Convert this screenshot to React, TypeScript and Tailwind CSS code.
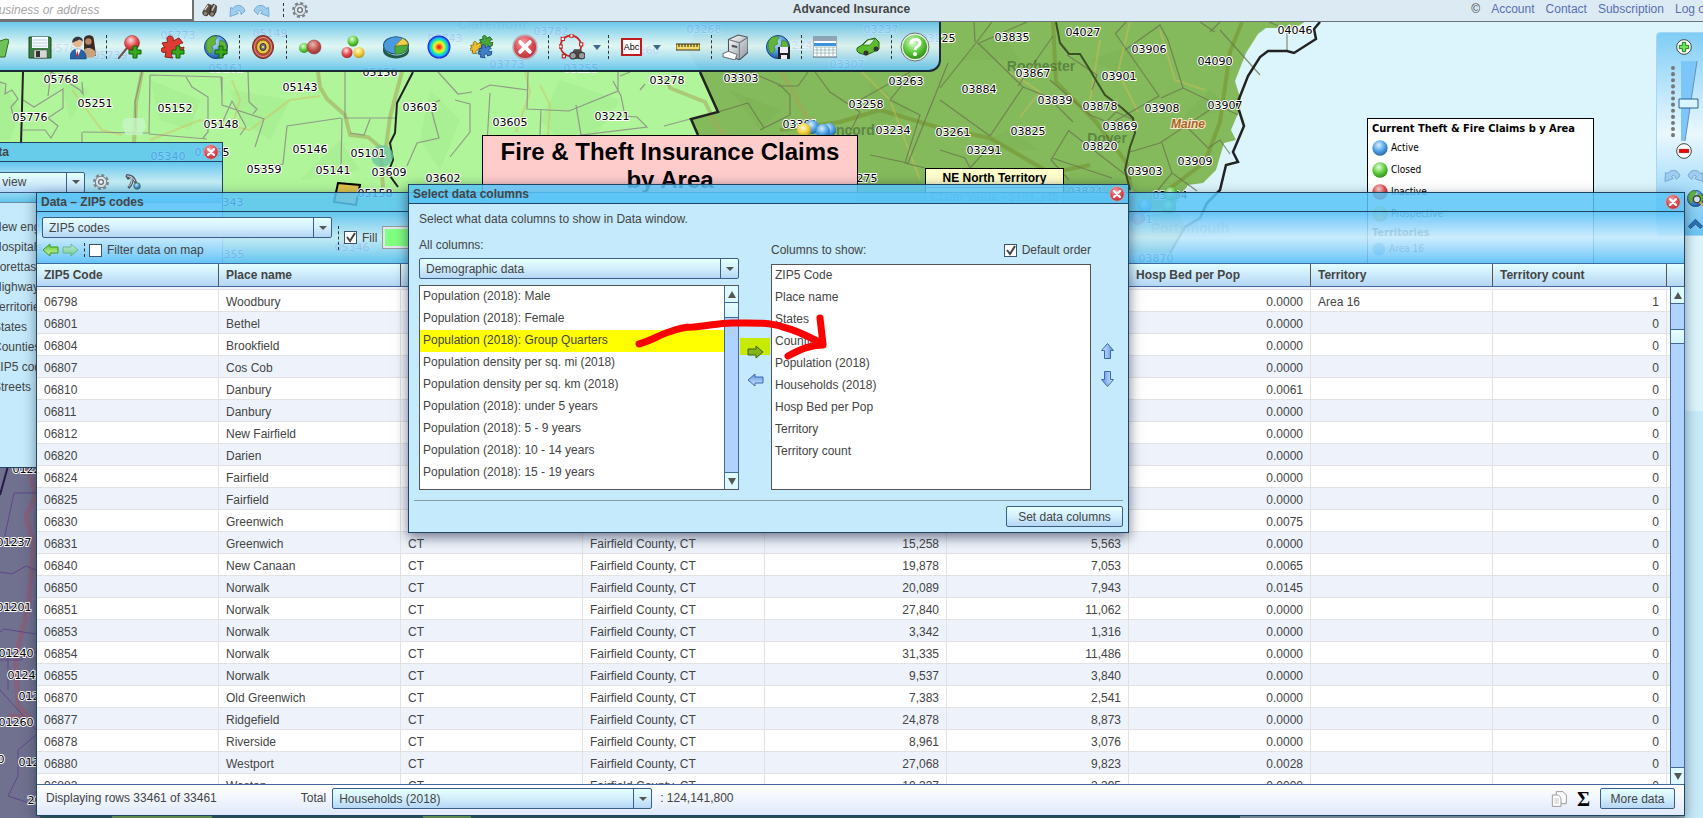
import React from "react";
import clsx from "clsx";

type Label = [string, number, number];

const zipLabels: Label[] = [
  ["05768", 61, 79], ["05251", 95, 103], ["05776", 30, 117], ["05152", 175, 108],
  ["05148", 221, 124], ["05143", 300, 87], ["05156", 380, 72], ["03603", 420, 107],
  ["05146", 310, 149], ["05101", 368, 153], ["05359", 264, 169], ["05141", 333, 170],
  ["03609", 389, 172], ["03602", 443, 178], ["05158", 375, 193], ["05340", 168, 156],
  ["05355", 212, 152], ["05343", 226, 202], ["05149", 270, 33], ["05773", 178, 35],
  ["05161", 226, 68], ["05761", 66, 48], ["05739", 110, 55], ["03782", 551, 31],
  ["03773", 507, 64], ["03255", 581, 68], ["03268", 704, 29], ["03260", 642, 50],
  ["03237", 881, 29], ["03224", 795, 45], ["03307", 847, 64], ["03743", 445, 38],
  ["03278", 667, 80], ["03303", 741, 78], ["03605", 510, 122], ["03221", 612, 116],
  ["03263", 906, 81], ["03258", 866, 104], ["03301", 800, 124], ["03234", 893, 130],
  ["03275", 860, 178], ["03261", 953, 132], ["03225", 938, 38], ["03835", 1012, 37],
  ["04027", 1083, 32], ["03906", 1149, 49], ["04090", 1215, 61], ["04046", 1295, 30],
  ["03867", 1033, 73], ["03901", 1119, 76], ["03884", 979, 89], ["03839", 1055, 100],
  ["03878", 1100, 106], ["03908", 1162, 108], ["03907", 1225, 105], ["03869", 1120, 126],
  ["03825", 1028, 131], ["03291", 984, 150], ["03820", 1100, 146], ["03903", 1145, 171],
  ["03909", 1195, 161], ["03824", 1085, 191], ["03904", 1170, 195], ["03801", 1135, 219],
  ["03870", 1156, 258], ["03046", 775, 200], ["05346", 352, 247], ["05355", 227, 254],
  ["01226", 30, 469], ["01237", 14, 542], ["01201", 14, 607], ["01240", 16, 653],
  ["01242", 25, 675], ["01223", 36, 696], ["01260", 16, 722], ["01230", -13, 759],
  ["01245", 36, 762], ["20134", 45, 800],
];

const columns = ["ZIP5 Code", "Place name", "States", "Counties", "Population (2018)", "Households (2018)", "Hosp Bed per Pop", "Territory", "Territory count"];

const rows: string[][] = [
  ["06798", "Woodbury", "9,723", "3,912", "0.0000", "Area 16", "1"],
  ["06801", "Bethel", "19,604", "7,228", "0.0000", "", "0"],
  ["06804", "Brookfield", "17,133", "6,325", "0.0000", "", "0"],
  ["06807", "Cos Cob", "7,216", "2,608", "0.0000", "", "0"],
  ["06810", "Danbury", "53,207", "18,674", "0.0061", "", "0"],
  ["06811", "Danbury", "31,904", "11,547", "0.0000", "", "0"],
  ["06812", "New Fairfield", "14,126", "4,894", "0.0000", "", "0"],
  ["06820", "Darien", "21,753", "6,939", "0.0000", "", "0"],
  ["06824", "Fairfield", "35,118", "11,267", "0.0000", "", "0"],
  ["06825", "Fairfield", "21,930", "7,631", "0.0000", "", "0"],
  ["06830", "Greenwich", "24,806", "9,954", "0.0075", "", "0"],
  ["06831", "Greenwich", "15,258", "5,563", "0.0000", "", "0"],
  ["06840", "New Canaan", "19,878", "7,053", "0.0065", "", "0"],
  ["06850", "Norwalk", "20,089", "7,943", "0.0145", "", "0"],
  ["06851", "Norwalk", "27,840", "11,062", "0.0000", "", "0"],
  ["06853", "Norwalk", "3,342", "1,316", "0.0000", "", "0"],
  ["06854", "Norwalk", "31,335", "11,486", "0.0000", "", "0"],
  ["06855", "Norwalk", "9,537", "3,840", "0.0000", "", "0"],
  ["06870", "Old Greenwich", "7,383", "2,541", "0.0000", "", "0"],
  ["06877", "Ridgefield", "24,878", "8,873", "0.0000", "", "0"],
  ["06878", "Riverside", "8,961", "3,076", "0.0000", "", "0"],
  ["06880", "Westport", "27,068", "9,823", "0.0028", "", "0"],
  ["06883", "Weston", "10,337", "3,395", "0.0000", "", "0"],
];

const allColumns = [
  "Population (2018): Male",
  "Population (2018): Female",
  "Population (2018): Group Quarters",
  "Population density per sq. mi (2018)",
  "Population density per sq. km (2018)",
  "Population (2018): under 5 years",
  "Population (2018): 5 - 9 years",
  "Population (2018): 10 - 14 years",
  "Population (2018): 15 - 19 years",
];

const layers = ["New england", "Hospitals", "Lorettas", "Highways", "Territories", "States", "Counties", "ZIP5 codes", "Streets"];

const control = "border border-[#3b5d8a] rounded-[2px] bg-linear-to-b from-[#e6ffff] via-[#d3effc] to-[#b5d6f5] text-[#444] text-xs";

/* ---------- shared gradients ---------- */

const Ball = ({ id, light, mid, dark }: { id: string; light: string; mid: string; dark: string }) => (
  <radialGradient id={id} cx="0.42" cy="0.32" r="0.75">
    <stop offset="0" stopColor={light} />
    <stop offset="0.55" stopColor={mid} />
    <stop offset="1" stopColor={dark} />
  </radialGradient>
);

const Gradients = () => (
  <defs>
    <Ball id="blue" light="#d8eeff" mid="#4c9fe4" dark="#1f5c9e" />
    <Ball id="green" light="#e4ffd8" mid="#5ccb38" dark="#2a8016" />
    <Ball id="red" light="#ffdede" mid="#e2484c" dark="#9c1c22" />
    <Ball id="close" light="#f5a0a4" mid="#dc4a52" dark="#b22a36" />
    <Ball id="yellow" light="#fffbd0" mid="#f0cc38" dark="#a98412" />
    <Ball id="maroon" light="#efb8b2" mid="#c4524e" dark="#8a2c2c" />
    <Ball id="globe" light="#c8e5ff" mid="#4a92e0" dark="#174a96" />
    <radialGradient id="heat">
      <stop offset="0.1" stopColor="#f22" />
      <stop offset="0.3" stopColor="#fb2" />
      <stop offset="0.45" stopColor="#df3" />
      <stop offset="0.62" stopColor="#2e8" />
      <stop offset="0.78" stopColor="#1bf" />
      <stop offset="0.95" stopColor="#22d" />
    </radialGradient>
    <linearGradient id="arrowBlue" x1="0" x2="0" y1="0" y2="1">
      <stop offset="0" stopColor="#d5e8ff" />
      <stop offset="1" stopColor="#5f93e0" />
    </linearGradient>
    <linearGradient id="arrowGreen" x1="0" x2="0" y1="0" y2="1">
      <stop offset="0" stopColor="#d5f7b0" />
      <stop offset="1" stopColor="#5cc52e" />
    </linearGradient>
    <linearGradient id="metal" x1="0" x2="1" y1="0" y2="1">
      <stop offset="0" stopColor="#fff" />
      <stop offset="1" stopColor="#8a939c" />
    </linearGradient>
  </defs>
);

/* ---------- icons, all on a 24 grid ---------- */

const Svg = ({ size = 24, children }: { size?: number; children: React.ReactNode }) => (
  <svg width={size} height={size} viewBox="0 0 24 24" className="block shrink-0" aria-hidden="true">
    {children}
  </svg>
);

const Plus = () => <path d="M15 11h4v4h4v4h-4v4h-4v-4h-4v-4h4z" fill="#38a81c" stroke="#17600a" />;

// jigsaw piece with two knobs and two notches
const PUZZLE = "M1 8l6-1c-2-3-1-6 2-6s4 3 3 5l6-3 4 5c-2 0-4 1-4 3s3 2 5 1l-1 6-6 2c0-3-2-4-4-3s-2 4 0 6l-8-1 1-5c-3 1-5 0-5-2s2-3 4-2z";

const Earth = () => (
  <>
    <circle cx="12" cy="12" r="11.5" fill="url(#globe)" stroke="#1c3f78" />
    <path d="M4 4c4-3 7-3 9-2l-2 4 1 3-4 2 1 4-3 4C2 16 1 9 4 4zM16 5l5 2 2 6-3 5-3-3-2-4z" fill="#62b43a" stroke="#3a7c20" strokeWidth=".6" />
  </>
);

const Disk = () => (
  <>
    <path d="M1 2h21l1 1v20H1z" fill="#3d7d3f" stroke="#1e4421" />
    <path d="M4 2h16v11H4z" fill="#f4faff" />
    <path d="M5 5h14M5 8h14M5 11h14" stroke="#b9cfe4" />
    <path d="M6 15h13v8H6z" fill="#d5d9d5" stroke="#4a4a4a" strokeWidth=".5" />
    <path d="M8 16h4v6H8z" fill="#333" />
  </>
);

const Cross = ({ size = 16 }: { size?: number }) => (
  <Svg size={size}>
    <circle cx="12" cy="12" r="11" fill="url(#close)" stroke="#b9aeb8" strokeWidth="1.5" />
    <path d="M7.5 7.5l9 9M16.5 7.5l-9 9" stroke="#fff" strokeWidth="3.5" strokeLinecap="round" />
  </Svg>
);

const Gear = ({ size = 16 }: { size?: number }) => (
  <Svg size={size}>
    <circle cx="12" cy="12" r="10" fill="none" stroke="#7d868e" strokeWidth="4" strokeDasharray="4.5 3.35" />
    <circle cx="12" cy="12" r="8.5" fill="#dfe4e8" stroke="#7a848c" strokeWidth="1.5" />
    <circle cx="12" cy="12" r="3.5" fill="#f4fbff" stroke="#66707a" strokeWidth="2" />
  </Svg>
);

const Undo = ({ flip = false }: { flip?: boolean }) => (
  <svg width="17" height="13" viewBox="0 0 17 13" className={clsx("block", flip && "-scale-x-100")} aria-hidden="true">
    <path d="M1.500 3.500l2.500 1C6.500 0 14 0 16 7l-4 3.500C11.500 7 9.500 5.500 7.500 7.500l2 2-8.500 3z" fill="#9fcdee" stroke="#76a9d2" />
  </svg>
);

const Arrow = ({ turn = "", fill = "url(#arrowBlue)", stroke = "#3a68b0" }: { turn?: string; fill?: string; stroke?: string }) => (
  <svg width="17" height="14" viewBox="0 0 17 14" className={clsx("block", turn)} aria-hidden="true">
    <path d="M1 4h8V1l7 6-7 6v-3H1z" fill={fill} stroke={stroke} />
  </svg>
);

const Binoculars = ({ size = 16 }: { size?: number }) => (
  <Svg size={size}>
    <path d="M2 13L9 3l5 2-3 12-4 4-6-4zM13 8l4-5 5 3-1 9-4 6-6-2z" fill="#5a5046" stroke="#2d2822" />
    <path d="M4 12l5-7M15 13l4-8" stroke="#d8d2c8" strokeWidth="2" />
    <circle cx="5" cy="17" r="3.5" fill="#8d8172" stroke="#2d2822" />
    <circle cx="15" cy="18" r="3.5" fill="#8d8172" stroke="#2d2822" />
  </Svg>
);

const toolIcons: Record<string, React.ReactNode> = {
  Open: (
    <Svg>
      <path d="M1 6h14l6-2 3 1-4 17H2z" fill="#6fc257" stroke="#2c6e1e" />
    </Svg>
  ),
  Save: <Svg><Disk /></Svg>,
  Users: (
    <Svg size={26}>
      <path d="M13 4c1-4 9-4 9 1l1 7 1 8H13z" fill="#3a2a24" />
      <circle cx="17" cy="7" r="3" fill="#b98664" />
      <path d="M11 22c0-7 3-9 6-9s7 2 7 6l-3 3z" fill="#c9a27e" />
      <circle cx="7" cy="8" r="4.5" fill="#e8b58e" />
      <path d="M2 8c0-7 10-7 10-1L9 5z" fill="#33383e" />
      <path d="M0 23c0-7 3-9 7-9s8 2 8 9z" fill="#2463a8" stroke="#143d70" strokeWidth=".6" />
      <path d="M5 14l2 8 3-8z" fill="#fff" />
      <path d="M7 15l-1 5 1 2 1-2z" fill="#c22" />
    </Svg>
  ),
  "Add marker": (
    <Svg>
      <path d="M0 24L9 13" stroke="#6a5248" strokeWidth="2" />
      <circle cx="14" cy="8" r="7.5" fill="url(#red)" stroke="#a83030" strokeWidth=".6" />
      <Plus />
    </Svg>
  ),
  "Add area": (
    <Svg>
      <path d={PUZZLE} fill="#de3a34" stroke="#8e1c18" />
      <Plus />
    </Svg>
  ),
  "Add layer": (
    <Svg>
      <Earth />
      <Plus />
    </Svg>
  ),
  Radius: (
    <Svg>
      <ellipse cx="12" cy="12" rx="10.5" ry="11.5" fill="#b5453a" stroke="#6e2720" />
      <ellipse cx="12" cy="12" rx="8.5" ry="9.5" fill="none" stroke="#e0958c" />
      <ellipse cx="12" cy="12" rx="6.5" ry="7" fill="#e8c548" stroke="#7c5a10" />
      <ellipse cx="12" cy="12" rx="3" ry="3.5" fill="#777" stroke="#333" />
      <circle cx="12" cy="12" r="1" fill="#ffe97a" />
    </Svg>
  ),
  Merge: (
    <Svg>
      <circle cx="6" cy="13" r="5" fill="url(#green)" />
      <circle cx="16" cy="12" r="7" fill="url(#maroon)" stroke="#8b2d2d" strokeWidth=".5" />
    </Svg>
  ),
  Groups: (
    <Svg>
      <circle cx="12" cy="6" r="5.5" fill="url(#green)" />
      <circle cx="6" cy="17.5" r="5.5" fill="url(#red)" />
      <circle cx="18" cy="17.5" r="5.5" fill="url(#yellow)" />
    </Svg>
  ),
  Charts: (
    <Svg size={26}>
      <path d="M0 10c0 12 24 14 24 0v5c0 10-24 10-24 0z" fill="#1f5a48" />
      <ellipse cx="12" cy="10.5" rx="11.5" ry="8" fill="#4a9ae0" stroke="#23557c" />
      <path d="M11 11l12-1c0 7-5 9-12 8.500z" fill="#4cab3e" stroke="#276b20" strokeWidth=".5" />
      <path d="M11 11L18 4c4 2 5 4 5 6z" fill="#f0cf45" stroke="#7f6510" strokeWidth=".5" />
    </Svg>
  ),
  "Heat map": (
    <Svg><circle cx="12" cy="12" r="11.5" fill="url(#heat)" /></Svg>
  ),
  Territories: (
    <Svg>
      <g transform="translate(9 0) scale(.6)"><path d={PUZZLE} fill="#48a53a" stroke="#206016" strokeWidth="1.5" /></g>
      <g transform="translate(0 6) scale(.55)"><path d={PUZZLE} fill="#e8c030" stroke="#7d6410" strokeWidth="1.5" /></g>
      <g transform="translate(8 9) scale(.6)"><path d={PUZZLE} fill="#3f7fc8" stroke="#1d4580" strokeWidth="1.5" /></g>
    </Svg>
  ),
  Delete: <Cross size={26} />,
  "Find in area": (
    <Svg size={26}>
      <circle cx="11" cy="11" r="9.5" fill="none" stroke="#cc2222" strokeWidth="1.5" />
      <path d="M10 0h3v3h-3zM19 8h3v3h-3zM0 10h3v3H0zM3 19h3v3H3zM2 3h3v3H2z" fill="#fff" stroke="#c22" />
      <path d="M11 19l3-5h6l4 6-3 3h-9z" fill="#4c4c4c" />
      <circle cx="13" cy="20" r="3" fill="#9b9b9b" stroke="#333" />
      <circle cx="21" cy="20" r="3" fill="#9b9b9b" stroke="#333" />
    </Svg>
  ),
  Label: (
    <span className="border-2 border-[#c11a1a] bg-white px-px text-[9px] leading-[14px] text-black">Abc</span>
  ),
  Measure: (
    <Svg>
      <path d="M0 9h24v6H0z" fill="#f5dc6a" stroke="#3d3210" />
      <path d="M3 9v3M6 9v3M9 9v3M12 9v3M15 9v3M18 9v3M21 9v3" stroke="#222" />
    </Svg>
  ),
  Print: (
    <Svg size={26}>
      <path d="M6 5l9-4 9 2v14l-8 7-10-5z" fill="url(#metal)" stroke="#4c5258" />
      <path d="M6 5l10 3v15M16 8l8-5" fill="none" stroke="#70767c" />
      <path d="M9 10l5 1v2l-5-1z" fill="#49505a" />
      <path d="M1 18l5-2 8 3-2 5-11-3z" fill="#fff" stroke="#70767c" />
    </Svg>
  ),
  "Save map": (
    <Svg>
      <Earth />
      <path d="M12 12h12v12H12z" fill="#222" />
      <path d="M14 12h8v6h-8zM15 20h6v4h-6z" fill="#eef" />
    </Svg>
  ),
  "Data window": (
    <Svg>
      <path d="M0 2h24v20H0z" fill="#fff" stroke="#56697a" />
      <path d="M0 2h24v4H0z" fill="#8fa5b5" />
      <path d="M1 8h22v3H1z" fill="#3a95dd" />
      <path d="M1 12h22M1 15h22M1 18h22M4 12v9M8 12v9M12 12v9M16 12v9M20 12v9" stroke="#8aa" strokeWidth=".7" />
    </Svg>
  ),
  Route: (
    <Svg>
      <path d="M1 13l5-3 5-5 8-2 4 4v7l-8 4-5 2-7-2-2-2z" fill="#5dbb2e" stroke="#256610" />
      <path d="M7 10l5-5 7-1-5 6z" fill="#d9f4e4" stroke="#256610" strokeWidth=".6" />
      <circle cx="10" cy="18" r="2.5" fill="#333" />
      <circle cx="20" cy="14" r="2.5" fill="#333" />
    </Svg>
  ),
  Help: (
    <svg width="30" height="30" viewBox="0 0 30 30" className="block" aria-hidden="true">
      <circle cx="15" cy="15" r="14" fill="#e9efe9" stroke="#6d756d" />
      <circle cx="15" cy="15" r="12" fill="url(#green)" />
      <path d="M11 12c0-6 9-6 9-1 0 4-5 3-5 7" fill="none" stroke="#fff" strokeWidth="3" />
      <circle cx="15" cy="22" r="2" fill="#fff" />
    </svg>
  ),
};

const tools = [
  "Open", "Save", "Users", "|", "Add marker", "Add area", "Add layer", "|", "Radius", "|",
  "Merge", "Groups", "Charts", "Heat map", "Territories", "Delete", "|", "Find in area", "v", "|",
  "Label", "v", "Measure", "|", "Print", "Save map", "|", "Data window", "Route", "|", "Help",
];

const Separator = ({ className = "h-6" }: { className?: string }) => (
  <span className={clsx("flex w-1 shrink-0 justify-center", className)}>
    <span className="border-l border-dashed border-[#333]" />
  </span>
);

/* ---------- form controls ---------- */

const Dropdown = ({ value, label, className }: { value: string; label: string; className: string }) => (
  <div className={clsx("relative h-[21px] shrink-0", className)}>
    <select aria-label={label} className={clsx(control, "h-full w-full appearance-none pl-1.5")}>
      <option>{value}</option>
    </select>
    <span className="pointer-events-none absolute inset-y-0 right-0 flex w-[19px] items-center justify-center border-l border-[#3b5d8a]">
      <span className="border-x-4 border-t-4 border-x-transparent border-t-[#555]" />
    </span>
  </div>
);

const Checkbox = ({ label, checked = false }: { label: string; checked?: boolean }) => (
  <label className="flex items-center gap-[5px] whitespace-nowrap">
    <span className="relative block size-[13px]">
      <input type="checkbox" defaultChecked={checked} className="peer block size-[13px] appearance-none border border-[#3f5266] bg-white" />
      <svg viewBox="0 0 13 13" className="pointer-events-none absolute inset-0 hidden peer-checked:block" aria-hidden="true">
        <path d="M3 6l3 4 5-8" fill="none" stroke="#444" strokeWidth="2" />
      </svg>
    </span>
    {label}
  </label>
);

const Scrollbar = ({ track, thumb }: { track: string; thumb: string }) => (
  <div className="flex w-[15px] shrink-0 flex-col border-x border-[#43689c] bg-[#b0d2ff]">
    <button aria-label="Scroll up" className="flex h-[17px] shrink-0 items-center justify-center border-b border-[#43689c] bg-[#dffaff]">
      <span className="border-x-4 border-b-[7px] border-x-transparent border-b-[#555]" />
    </button>
    <div className={track} />
    <div className={clsx("h-[15px] shrink-0 border-b border-[#43689c] bg-linear-to-b from-[#e4ffff] to-[#d3f2fc]", thumb)} />
    <div className="flex-1" />
    <button aria-label="Scroll down" className="flex h-[17px] shrink-0 items-center justify-center border-t border-[#43689c] bg-[#dffaff]">
      <span className="border-x-4 border-t-[7px] border-x-transparent border-t-[#555]" />
    </button>
  </div>
);

const TitleBar = ({ title, className }: { title: string; className?: string }) => (
  <div className={clsx("flex h-[19px] shrink-0 items-center justify-between border-b border-[#1f4562] bg-[#5bc4f8]/85 pr-[3px] pl-1 font-bold text-[#444]", className)}>
    <h2>{title}</h2>
    <button aria-label={`Close ${title}`}><Cross /></button>
  </div>
);

/* ---------- map ---------- */

const Map = () => (
  <svg viewBox="0 22 1703 796" preserveAspectRatio="xMidYMid slice" className="absolute inset-0 h-full w-full" aria-label="Map">
    <Gradients />
    <path d="M0 22h1703v796H0z" fill="#dcf5fc" />
    <path d="M1683 411h20v407h-20z" fill="#c8ebfa" />
    <path d="M0 22h760v380H0z" fill="#b0f59a" />
    <g fill="#a2e98b" opacity=".5">
      <path d="M0 80l20 30-10 30H0zM60 80l30 10-20 30zM150 80l50 20-10 30-30-10zM230 90l60 10-20 40-30-20zM430 90l30 30-20 50-20-30zM560 80l60 20-40 60-40-40zM300 180l40-40 20 30z" />
    </g>
    <path d="M700 22L687 50 700 72l18 40-27 7 7 16 30 80h440l20-30 15-2 13-13 8-27 12-3-5-10 11-26-7-23 11-28 12-19 8-6h19l7 2 22-14-2-10 6-7z" fill="#84ba5b" />
    <g fill="#76ac50" opacity=".25">
      <path d="M730 90l50 20-20 20zM870 80l40 30-40 20zM960 60l40-30 20 30zM1090 60l60-20-20 40zM1180 120l30-30 20 20zM960 150l50-20 30 20z" />
    </g>
    <path d="M1130 188l20 18 30 8 5 13-15 26h-40z" fill="#a9cf8b" />

    {/* roads */}
    <g fill="none" stroke="#a5a55a" strokeLinejoin="round" opacity=".55">
      <path d="M142 72l-6 30-2 42" strokeWidth="4" />
      <path d="M318 72l2 15 7 12 18 16 5 20 18 2 12 10 3 40" strokeWidth="4" />
      <path d="M402 72l-12 45-4 30" strokeWidth="4" />
      <path d="M665 76l5 12 35 14 10 20 12 16M782 72l25 45 8 8" strokeWidth="4" />
      <path d="M780 130l60-8 40-12 60 18 50 10 60 35 40-8M1053 22l3 60 40 40 30 40 5 25M1242 22l-12 30-10 70-15 40-40 30" stroke="#76902f" strokeWidth="4" />
    </g>
    <g fill="none" stroke="#d3bd5e" strokeWidth="2" opacity=".45">
      <path d="M72 90l30 40 20 5M150 140l50-20 50 10 40-30 30-4M232 80l8 20-6 20M525 72l5 20-14 40M540 85l10 20-2 30M850 60l40 40 30 80M1130 22l-12 50 20 40M1160 30l15 50 30 10M1010 72l30 20-20 25M1100 40l-10 60" />
    </g>

    {/* zip code boundaries */}
    <g fill="none" stroke="#8b8585" strokeWidth="1.2" opacity=".8">
      <path d="M0 82l6 2-1 10 7-4 6 9-7 8 4 15M48 96l3-24 29 18 3 4-1-12M23 100l11 7 29-18v19l-15 10 10 8-7 12-6-8H23M82 132v10M142 72l-7 30 1 28M150 75l-1 58-66-1M150 75l71 2 1 20M149 134l58 5M186 77l6 10 16 10v35l-5 6M222 77v28l42 14-9 28M248 72l1 30 8 7-4 5M240 135l6-8-14-26-9 20M345 72v46M345 118h50M341 118l-54 8-4 38-30 6M342 118l-1 50M370 119l-6 16-14-2M438 72l20 22 14-2M440 100l-10 5 9 33-22 5-10 23M455 100l15 4v28l-20 25M480 90l10-5 38 5M528 72l-1 37 42 2 49-20V72M490 93l-3 50M541 109l-1 26M576 105l5 30 66-8-10-10-12-1-4-20-8-15M640 90l5-6M620 76l10-4M664 126l30-8" />
      <path d="M718 112l30-9 16 25M750 72l30 13M780 85l10 10v20l-30 15M815 72l15 20 30 20-10 20M778 86l20 0 10-14M860 100l50-28M910 75l-20 25 30 15-15 48 20 5M870 155l38 8 40-100M940 88l36-45L992 22M974 22l1 20M978 43l45 44-33 49M940 100l50 36M1023 87l25 10 25 25M977 44l50-22M1053 36l-35 50M1050 80l40 35 30 12M1115 33l44 63-44 25M1116 33l10-11M1125 50l35-25 8 15 15 48-22 10M1183 88l25 12 30 15M1200 22l15 10M1210 32l10-10M1220 30l40 45M1287 50V30l-18-8M1130 152l30-9 60-40M1162 143l10 30-25 30M1172 173l25 18M1188 128l20 20 12-8 10 14M1069 130l-18 30 18 20M1052 158l60 20M1067 55l30 20-5 15M940 150l25 8 5 10 20-22M1069 131l62 48M1108 120l8-8 18 8" stroke="#6d7650" />
    </g>

    {/* state lines */}
    <g fill="none" stroke="#222" strokeWidth="2">
      <path d="M23 72l-2 72M413 72l-16 31-2 30-5 10 3 17-5 13 10 14" />
      <path d="M700 72l18 40-27 7 7 16" strokeWidth="2.5" />
      <path d="M1056 22l4 21 9 11h11l10 16 7 12 8 13 17 13 11 10 2 15-5 14-5 23 5 20" stroke="#3d4f24" />
      <path d="M1320 22l-6 7 2 10-22 14-7-2h-19l-8 6-12 19-11 28 7 22-11 26 5 10-12 3-6 25-13 13-7 15-15 9-15 26" strokeWidth="2.5" />
    </g>
    <path d="M338 183l22 2-4 20-22-3z" fill="#ddc04a" stroke="#000" strokeWidth="2" />
    <path d="M124 118h20l2 8-4 9h-16l-4-9z" fill="#c8f5c8" opacity=".8" />
    <circle cx="382" cy="156" r="11" fill="#6fc7a0" opacity=".8" />

    {/* south-west corner and the strip under the windows */}
    <path d="M0 466h40v352H0z" fill="#70708f" />
    <path d="M28 466l8 30-10 20 8 30-6 60-12 50 2 50 10 10H8" fill="none" stroke="#84627c" strokeWidth="5" />
    <path d="M36 493H14L4 540M0 572l12 2 14-8 10 4M36 634l-32-5-4 3M8 690v-40M0 660h20l16-8M0 690l36 40M36 735l-18 15v26l-10 20 24 8" fill="none" stroke="#60468b" />
    <path d="M8 466L0 495" stroke="#251a48" strokeWidth="2" />
    <path d="M40 814h1645v4H40z" fill="#2f5f66" />
    <path d="M112 814h100v4H112zM423 814h48v4h-48z" fill="#84ba5b" />
    <path d="M1240 814h445v4h-445z" fill="#9fb8c4" />

    <g fontFamily="Liberation Sans, sans-serif" fontWeight="bold" fontSize="14" fill="#35502a" fillOpacity=".5" textAnchor="middle">
      <text x="1041" y="71">Rochester</text>
      <text x="1107" y="143">Dover</text>
      <text x="1190" y="233">Portsmouth</text>
      <text x="846" y="135">Concord</text>
      <text x="492" y="29">Claremont</text>
    </g>
    <text x="1188" y="128" fontFamily="Liberation Sans, sans-serif" fontWeight="bold" fontStyle="italic" fontSize="12" fill="#a8641e" stroke="#f7e8cc" strokeWidth="2" paintOrder="stroke" textAnchor="middle">Maine</text>
    <g fontFamily="DejaVu Sans, sans-serif" fontSize="11" fill="#000" stroke="#fff" strokeWidth="2" paintOrder="stroke" textAnchor="middle">
      {zipLabels.map(([zip, x, y]) => (
        <text key={`${zip}-${x}`} x={x} y={y + 4}>{zip}</text>
      ))}
    </g>

    {/* claims */}
    <circle cx="812" cy="127" r="7" fill="url(#blue)" />
    <circle cx="804" cy="130" r="7" fill="url(#yellow)" />
    <circle cx="829" cy="130" r="7" fill="url(#blue)" />
    <circle cx="823" cy="131" r="7" fill="url(#blue)" />
    <circle cx="1171" cy="194" r="7" fill="url(#green)" />
    <circle cx="1145" cy="206" r="7" fill="url(#blue)" />
    <circle cx="1169" cy="207" r="7" fill="url(#green)" />
    <circle cx="1138" cy="218" r="7" fill="url(#red)" />
  </svg>
);

const Legend = () => (
  <section className="absolute top-24 right-[109px] w-[227px] border border-black bg-white px-1 pt-px pb-4 font-['DejaVu_Sans_Condensed','DejaVu_Sans',sans-serif] text-[10px] text-black">
    <h2 className="text-[11px] leading-[17px] font-bold whitespace-nowrap">Current Theft &amp; Fire Claims b y Area</h2>
    <ul>
      {[["Active", "url(#blue)"], ["Closed", "url(#green)"], ["Inactive", "url(#red)"], ["Prospective", "url(#yellow)"]].map(([name, fill]) => (
        <li key={name} className="flex h-[22px] items-center gap-[3px]">
          <Svg size={16}><circle cx="12" cy="12" r="11.5" fill={fill} /></Svg>
          {name}
        </li>
      ))}
    </ul>
    <h3 className="text-[11px] leading-4 font-bold">Territories</h3>
    <p className="flex h-4 items-center gap-[3px]">
      <Svg size={14}><circle cx="12" cy="12" r="11" fill="#3f93dc" /></Svg>
      Area 16
    </p>
  </section>
);

const ZoomPanel = () => (
  <div className="absolute top-2.5 -right-2 flex h-[204px] w-[55px] flex-col items-center rounded-l border border-[#a5d8f0] bg-linear-to-b from-[#7fcdf5] via-[#eaf8fe] to-[#6ac5f5] pt-1.5">
    <button aria-label="Zoom in">
      <Svg size={16}>
        <circle cx="12" cy="12" r="11" fill="#fff" stroke="#444" strokeWidth="1.5" />
        <path d="M9.5 5h5v4.5H19v5h-4.5V19h-5v-4.5H5v-5h4.5z" fill="#6fe45c" stroke="#1f7d18" strokeWidth="1.5" />
      </Svg>
    </button>
    <label className="relative mt-1 block">
      <input type="range" aria-label="Zoom level" className="absolute inset-0 h-full w-full opacity-0" />
      <svg width="30" height="84" viewBox="0 0 30 84" className="block" aria-hidden="true">
        <path d="M4 9v70" stroke="#777" strokeWidth="4" strokeLinecap="round" strokeDasharray="0.1 6" />
        <path d="M12 2h16l-12 80h-4z" fill="#7cc6fb" />
        <path d="M28 2L16 82" stroke="#6b8fae" />
        <path d="M10 40h19v9H10z" fill="#d8f4ff" stroke="#2b6194" />
      </svg>
    </label>
    <button aria-label="Zoom out">
      <Svg size={16}>
        <circle cx="12" cy="12" r="11" fill="#fff" stroke="#444" strokeWidth="1.5" />
        <path d="M5 9.5h14v5H5z" fill="#f00000" stroke="#800" />
      </Svg>
    </button>
    <div className="mt-2.5 grid grid-cols-2 place-items-center gap-x-1.5 gap-y-2">
      <button aria-label="Previous view"><Undo /></button>
      <button aria-label="Next view"><Undo flip /></button>
      <span />
      <button aria-label="Zoom to world">
        <Svg size={17}><Earth /><circle cx="14" cy="13" r="5" fill="#cde4fa" stroke="#444" strokeWidth="2" /><path d="M18 17l5 5" stroke="#dca53a" strokeWidth="3" /></Svg>
      </button>
      <span />
      <button aria-label="Collapse">
        <Svg size={17}><path d="M2 16L12 6l10 10-3 3-7-6-7 6z" fill="#2b73b5" stroke="#153f6c" /></Svg>
      </button>
    </div>
  </div>
);

const LayersWindow = () => (
  <section className="absolute top-[120px] -left-6 flex h-[326px] w-[247px] flex-col border border-[#1f4562]">
    <TitleBar title="Data" className="pl-1.5" />
    <div className="flex h-[41px] shrink-0 items-center gap-2 border-b border-[#6b8ca3] bg-linear-to-b from-[#58c0f8]/90 via-[#c5eafc]/90 to-[#58c0f8]/90">
      <Dropdown label="View" value="My view" className="-ml-px w-[109px]" />
      <button aria-label="Layer settings"><Gear /></button>
      <button aria-label="Layer tools" className="ml-2">
        <Svg size={16}>
          <path d="M2 2c7 0 11 3 13 8l2 6M10 4c2 6 0 12-5 17M2 2l4 6" fill="none" stroke="#4a5560" strokeWidth="4" />
          <path d="M3 3c6 0 10 3 12 8M10 5c1 6 0 10-4 14" fill="none" stroke="#dfe6ea" strokeWidth="1.5" />
          <circle cx="18" cy="18" r="5" fill="url(#globe)" stroke="#2f7a2c" />
        </Svg>
      </button>
    </div>
    <ul className="flex-1 bg-[#c5eafc] pt-3.5 pl-4 text-[#444]">
      {layers.map((name) => (
        <li key={name} className="h-5 leading-5">{name}</li>
      ))}
    </ul>
  </section>
);

const DataWindow = () => (
  <section className="absolute top-[170px] right-[18px] bottom-0.5 left-9 flex flex-col border border-[#1f4562] shadow-[0_4px_12px_rgba(20,40,60,0.5)]">
    <TitleBar title="Data – ZIP5 codes" />
    <div className="flex h-[51px] shrink-0 items-center gap-1 bg-linear-to-b from-[#58c0f8]/90 via-[#c5eafc]/90 to-[#58c0f8]/90 pl-[5px]">
      <div className="flex flex-col gap-1">
        <Dropdown label="Data layer" value="ZIP5 codes" className="w-[290px]" />
        <div className="flex items-center gap-[3px]">
          <button aria-label="Back"><Arrow turn="rotate-180" fill="url(#arrowGreen)" stroke="#3c9a1c" /></button>
          <button aria-label="Forward" className="opacity-50"><Arrow fill="url(#arrowGreen)" stroke="#3c9a1c" /></button>
          <Separator className="h-3.5" />
          <Checkbox label="Filter data on map" />
        </div>
      </div>
      <Separator />
      <div className="flex items-center gap-1.5">
        <Checkbox label="Fill" checked />
        <button aria-label="Fill colour" className="h-[21px] w-10 border-2 border-[#dfe8e8] bg-[#80ff80] outline outline-[#999]" />
      </div>
    </div>
    <div className="relative flex min-h-0 flex-1 border-t border-[#43689c] bg-white">
      <div className="min-w-0 flex-1 overflow-hidden">
        <table className="w-full table-fixed border-separate border-spacing-0 text-[#444]">
          <colgroup>
            {columns.map((name) => (
              <col key={name} className={name === "Territory count" ? "w-auto" : "w-[182px]"} />
            ))}
            <col className="w-[3px]" />
          </colgroup>
          <thead>
            <tr className="h-[23px] text-left">
              {columns.map((name) => (
                <th key={name} className="border-r border-b border-r-[#555] border-b-[#43689c] bg-linear-to-b from-[#e4ffff] to-[#b5d6f5] px-[7px] py-0 font-bold">{name}</th>
              ))}
              <td className="border-b border-[#43689c] bg-linear-to-b from-[#e4ffff] to-[#b5d6f5]" />
            </tr>
          </thead>
          <tbody>
            <tr className="h-[3px]" aria-hidden="true">
              <td colSpan={10} className="border-b border-[#e2e2e2] bg-[#eef3fb] p-0" />
            </tr>
            {rows.map(([zip, place, pop, households, beds, territory, count]) => (
              <tr key={zip} className="h-[22px] even:bg-white odd:bg-[#eef3fb]">
                {[zip, place, "CT", zip === "06798" ? "Litchfield County, CT" : "Fairfield County, CT", pop, households, beds, territory, count].map((cell, i) => (
                  <td key={i} className={clsx("border-r border-b border-[#e2e2e2] px-[7px] pt-[3px] pb-0", (i > 3 && i !== 7) && "text-right")}>{cell}</td>
                ))}
                <td className="border-b border-[#e2e2e2]" />
              </tr>
            ))}
          </tbody>
        </table>
      </div>
      <div className="flex w-[14px] shrink-0 flex-col">
        <div className="h-[23px] shrink-0 border-b border-[#43689c] bg-linear-to-b from-[#e4ffff] to-[#b5d6f5]" />
        <div className="flex min-h-0 flex-1">
          <Scrollbar track="h-[25px] shrink-0" thumb="border-t" />
        </div>
      </div>
    </div>
    <footer className="flex h-[31px] shrink-0 items-start border-t border-[#43689c] bg-linear-to-b from-white to-[#e0e9fb] px-[9px] pt-[3px] leading-[21px]">
      <span>Displaying rows 33461 of 33461</span>
      <span className="mr-1.5 ml-auto pl-4 lg:ml-[84px] lg:pl-0">Total</span>
      <Dropdown label="Total column" value="Households (2018)" className="w-80" />
      <span className="ml-2">: 124,141,800</span>
      <div className="ml-auto flex items-center gap-2.5">
        <button aria-label="Copy">
          <Svg size={16}>
            <path d="M8 1h10l5 5v13H8z" fill="#fff" stroke="#999" strokeWidth="1.5" />
            <path d="M2 6h9l4 4v13H2z" fill="#fff" stroke="#999" strokeWidth="1.5" />
            <path d="M5 12h7M5 15h7M5 18h7" stroke="#aaa" />
          </Svg>
        </button>
        <button aria-label="Statistics" className="font-['Liberation_Serif',serif] text-xl leading-5 font-bold text-black">Σ</button>
        <button className={clsx(control, "h-[21px] w-[75px]")}>More data</button>
      </div>
    </footer>
  </section>
);

const ColumnsDialog = () => (
  <section role="dialog" aria-label="Select data columns" className="absolute top-[162px] left-[408px] w-[721px] border border-[#1f4562] shadow-[0_4px_12px_rgba(20,30,60,0.6)]">
    <TitleBar title="Select data columns" />
    <div className="bg-[#c5eafc] px-[5px] pb-[5px]">
      <p className="pt-[7px] pl-[5px]">Select what data columns to show in Data window.</p>
      <div className="flex pt-2.5 pl-[5px]">
        <div className="w-80">
          <p id="all-columns" className="mb-[5px]">All columns:</p>
          <Dropdown label="Column group" value="Demographic data" className="mb-1.5 w-full" />
          <div className="flex h-[205px] border border-[#555] border-r-0 bg-white">
            <ul role="listbox" aria-labelledby="all-columns" className="flex-1">
              {allColumns.map((name, i) => (
                <li key={name} role="option" aria-selected={i === 2} className={clsx("h-[22px] pl-[3px] leading-5", i === 2 && "bg-[#ffff00]")}>{name}</li>
              ))}
            </ul>
            <Scrollbar track="" thumb="" />
          </div>
        </div>
        <div className="flex w-8 flex-col items-center pt-[101px]">
          <button aria-label="Add column" className="flex h-[17px] w-[30px] items-end justify-center bg-[#c6ea00]">
            <span className="-mb-1"><Arrow fill="#84b414" stroke="#41600c" /></span>
          </button>
          <button aria-label="Remove column" className="mt-[18px]"><Arrow turn="rotate-180" /></button>
        </div>
        <div className="w-80 pt-[5px]">
          <div className="mb-1.5 flex items-center justify-between">
            <span id="shown-columns">Columns to show:</span>
            <Checkbox label="Default order" checked />
          </div>
          <ul role="listbox" aria-labelledby="shown-columns" className="h-[226px] border border-[#555] bg-white">
            {columns.map((name) => (
              <li key={name} role="option" aria-selected="false" className="h-[22px] pl-[3px] leading-5">{name}</li>
            ))}
          </ul>
        </div>
        <div className="flex w-8 flex-col items-center gap-[14px] pt-[107px]">
          <button aria-label="Move up"><Arrow turn="-rotate-90" /></button>
          <button aria-label="Move down"><Arrow turn="rotate-90" /></button>
        </div>
      </div>
      <div className="mt-2.5 flex justify-end border-t border-[#8a9aa5] pt-[5px]">
        <button className={clsx(control, "h-[21px] w-[117px]")}>Set data columns</button>
      </div>
    </div>
    {/* hand-drawn pointer from the column to the target list */}
    <svg viewBox="408 184 721 350" className="pointer-events-none absolute -top-px -left-px h-[350px] w-[721px]" aria-hidden="true">
      <path d="M639 344c12-3 20-9 30-12 10-4 17-5 24-5 15-1 25-4 40-4 17 0 36-1 50 4 16 4 28 11 40 17M820 318l3 26M823 345c-13 0-22 4-35 11" fill="none" stroke="#f00" strokeWidth="7" strokeLinecap="round" strokeLinejoin="round" />
    </svg>
  </section>
);

const App = () => {
  return (
    <div className="flex h-screen min-h-[600px] flex-col overflow-hidden bg-[#dcf5fc] font-['Liberation_Sans',Arial,sans-serif] text-xs leading-4 text-[#444]">
      <header className="grid h-[22px] shrink-0 grid-cols-[1fr_auto_1fr] items-start border-b border-[#6b7379] bg-[#dcebf3] leading-[19px]">
        <div className="flex h-[21px] items-start gap-2">
          <input aria-label="Search" placeholder="business or address" className="-ml-2 h-[21px] w-[202px] border-r-2 border-b-2 border-[#707070] bg-white italic placeholder:text-[#a5a5a5]" />
          <div className="flex h-5 items-center gap-[7px]">
            <button aria-label="Find" className="mr-1"><Binoculars /></button>
            <button aria-label="Undo"><Undo /></button>
            <button aria-label="Redo"><Undo flip /></button>
            <Separator className="ml-1 h-3.5" />
            <button aria-label="Settings"><Gear /></button>
          </div>
        </div>
        <h1 className="font-bold">Advanced Insurance</h1>
        <nav className="-mr-3 flex justify-end gap-[11px] text-[#5a6db5]">
          <span className="text-[#444]">©</span>
          <a href="#account">Account</a>
          <a href="#contact">Contact</a>
          <a href="#subscription">Subscription</a>
          <a href="#logout">Log out</a>
        </nav>
      </header>

      <main className="relative flex-1 overflow-hidden">
        <Map />

        <h2 className="absolute top-[113px] left-[482px] h-20 w-[376px] border border-black bg-[#ffcccc] px-4 pt-0.5 text-center text-2xl leading-7 font-bold text-black">
          Fire &amp; Theft Insurance Claims by Area
        </h2>
        <div className="absolute top-[146px] left-[925px] w-[139px] border border-black bg-[#ffffcc] text-center font-bold whitespace-nowrap text-black">
          <p className="border-b border-[#999] leading-[18px]">NE North Territory</p>
          <p className="leading-[18px]">Claim Value - $101,346</p>
        </div>
        <Legend />
        <ZoomPanel />

        <div role="toolbar" aria-label="Map tools" className="absolute top-0 -left-[25px] flex h-[50px] items-center rounded-br-xl border-r-2 border-b-2 border-[#1b2b33] bg-linear-to-b from-[#63c3f4]/90 via-[#e6f7fc]/90 to-[#63c3f4]/90 pt-0.5 pr-[3px]">
          {tools.map((name, i) => {
            if (name === "|") return <Separator key={i} />;
            if (name === "v") {
              return (
                <button key={i} aria-label="More options" className="flex w-[13px] justify-start">
                  <span className="border-x-4 border-t-[5px] border-x-transparent border-t-[#3c6a86]" />
                </button>
              );
            }
            return (
              <button key={i} aria-label={name} className="flex h-10 w-[43px] shrink-0 items-center justify-center">
                {toolIcons[name]}
              </button>
            );
          })}
        </div>

        <LayersWindow />
        <DataWindow />
        <ColumnsDialog />
      </main>
    </div>
  );
};

export default App;
